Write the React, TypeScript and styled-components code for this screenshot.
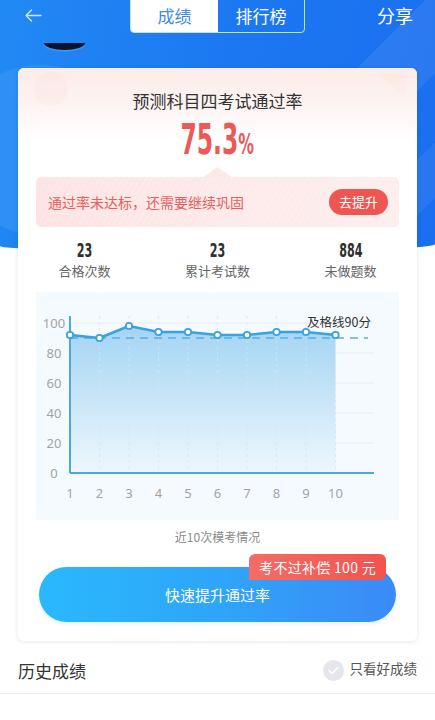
import React from "react";
import styled, { createGlobalStyle } from "styled-components";

const GlobalStyle = createGlobalStyle`
  html, body { margin: 0; padding: 0; background: #fff; }
  body { font-family: "Noto Sans CJK SC", "Noto Sans", sans-serif; width: 435px; }
  * { box-sizing: border-box; }
`;

const Page = styled.div`
  position: relative;
  width: 435px;
  min-height: 720px;
  overflow: hidden;
  background: #fff;
`;

const Backdrop = styled.div`
  position: absolute;
  left: 0;
  top: 0;
  width: 435px;
  height: 252px;
  background:
    radial-gradient(circle at 40px 150px, rgba(255, 255, 255, 0.07) 0 85px, transparent 86px),
    linear-gradient(135deg, transparent 0 62%, rgba(255, 255, 255, 0.07) 62% 74%, transparent 74%),
    linear-gradient(135deg, transparent 0 84%, rgba(255, 255, 255, 0.06) 84% 92%, transparent 92%),
    linear-gradient(100deg, #2189f4 0%, #1c78f1 50%, #1b6ef0 100%);
  border-radius: 0 0 45% 55% / 0 0 8px 6px;
  z-index: 0;
`;

const Smile = styled.div`
  position: absolute;
  left: 44px;
  top: 43px;
  width: 41px;
  height: 7px;
  background: #08152c;
  border-radius: 0 0 50% 50% / 0 0 100% 100%;
  box-shadow: 0 1px 2px rgba(120, 180, 255, 0.6);
`;

const Content = styled.div`
  position: relative;
  z-index: 1;
`;

const TopBar = styled.div`
  display: grid;
  grid-template-columns: 1fr auto 1fr;
  align-items: start;
  height: 33px;
`;

const Back = styled.div`
  padding: 9px 0 0 25px;
  line-height: 0;
`;

const Tabs = styled.div`
  display: flex;
  margin-top: -4px;
  height: 37px;
  border: 1px solid rgba(255, 255, 255, 0.75);
  border-radius: 0 0 4px 4px;
  overflow: hidden;
`;

const Tab = styled.div<{ $active?: boolean }>`
  width: ${(p) => (p.$active ? 87 : 86)}px;
  display: flex;
  align-items: center;
  justify-content: center;
  padding-top: 3px;
  font-size: 17px;
  line-height: 24px;
  background: ${(p) => (p.$active ? "#fff" : "transparent")};
  color: ${(p) => (p.$active ? "#3f8be3" : "#fff")};
`;

const Share = styled.div`
  justify-self: end;
  padding: 3px 22px 0 0;
  font-size: 18px;
  line-height: 24px;
  color: #fff;
`;

const Card = styled.div`
  margin: 35px 18px 0;
  background: #fff;
  border-radius: 6px;
  box-shadow: 0 1px 5px rgba(0, 0, 0, 0.1);
  overflow: hidden;
  padding-bottom: 19px;
`;

const CardHead = styled.div`
  position: relative;
  padding-top: 21px;
  text-align: center;
  background: linear-gradient(180deg, #fdebe8 0%, #fdf3f1 35%, #ffffff 75%);
  &::before {
    content: "";
    position: absolute;
    left: 16px;
    top: 4px;
    width: 34px;
    height: 34px;
    border-radius: 50%;
    background: rgba(250, 215, 205, 0.18);
  }
  &::after {
    content: "";
    position: absolute;
    right: 10px;
    top: 6px;
    width: 44px;
    height: 44px;
    background: linear-gradient(135deg, rgba(250, 210, 200, 0.25), rgba(255, 255, 255, 0));
    clip-path: polygon(40% 0, 100% 0, 100% 60%);
  }
`;

const Title = styled.div`
  position: relative;
  z-index: 1;
  font-size: 17px;
  line-height: 24px;
  color: #333;
`;

const RateRow = styled.div`
  height: 44px;
  margin-top: 7px;
  display: flex;
  justify-content: center;
  align-items: center;
`;

const Rate = styled.div`
  display: inline-block;
  font-family: "DejaVu Sans Condensed", "DejaVu Sans", sans-serif;
  font-weight: bold;
  font-size: 42px;
  line-height: 44px;
  color: #eb5a56;
  transform: scaleX(0.62);
  white-space: nowrap;
`;

const Pct = styled.span`
  font-size: 28px;
`;

const Banner = styled.div`
  position: relative;
  margin: 13px 18px 0;
  height: 50px;
  border-radius: 5px;
  display: flex;
  align-items: center;
  justify-content: space-between;
  padding: 0 11px 0 12px;
  background:
    repeating-linear-gradient(120deg, rgba(255, 255, 255, 0.12) 0 2px, transparent 2px 5px),
    linear-gradient(90deg, #fde4e3 0%, #fdeaea 60%, #fdeeed 100%);
  &::before {
    content: "";
    position: absolute;
    left: 50%;
    top: -10px;
    margin-left: -14px;
    width: 28px;
    height: 10px;
    background: #fde8e7;
    clip-path: polygon(50% 0, 100% 100%, 0 100%);
  }
`;

const BannerText = styled.span`
  font-size: 14px;
  line-height: 20px;
  color: #e8605c;
`;

const BoostButton = styled.div`
  width: 59px;
  height: 26px;
  border-radius: 13px;
  background: #ef5652;
  color: #fff;
  font-size: 13px;
  line-height: 26px;
  text-align: center;
`;

const Stats = styled.div`
  display: grid;
  grid-template-columns: repeat(3, 1fr);
  margin-top: 12px;
`;

const Stat = styled.div`
  display: flex;
  flex-direction: column;
  align-items: center;
`;

const StatNum = styled.div`
  font-family: "DejaVu Sans Condensed", "DejaVu Sans", sans-serif;
  font-weight: bold;
  font-size: 20px;
  line-height: 22px;
  color: #2f2f2f;
  transform: scaleX(0.62);
`;

const StatLabel = styled.div`
  font-size: 13px;
  line-height: 20px;
  color: #666;
`;

const ChartBox = styled.div`
  margin: 11px 18px 0;
  height: 228px;
  background: #f5fafe;
  line-height: 0;
`;

const Caption = styled.div`
  margin-top: 8px;
  text-align: center;
  font-size: 12px;
  line-height: 18px;
  color: #8a8a8a;
`;

const ActionWrap = styled.div`
  position: relative;
  margin: 21px 21px 0;
`;

const ActionButton = styled.div`
  height: 55px;
  border-radius: 28px;
  background: linear-gradient(90deg, #29b9fb 0%, #2fa5f9 50%, #3b8af6 100%);
  color: #fff;
  font-size: 15px;
  line-height: 55px;
  text-align: center;
  box-shadow: 0 2px 4px rgba(60, 140, 240, 0.15);
`;

const Tag = styled.div`
  position: absolute;
  right: 10px;
  top: -13px;
  height: 26px;
  padding: 0 10px;
  border-radius: 6px 6px 6px 0;
  background: linear-gradient(90deg, #f36d66 0%, #f2534e 100%);
  color: #fff;
  font-size: 14px;
  line-height: 26px;
  letter-spacing: 0.3px;
  white-space: nowrap;
`;

const HistoryRow = styled.div`
  display: flex;
  align-items: center;
  justify-content: space-between;
  height: 53px;
  padding: 7px 18px 0;
  border-bottom: 1px solid #ededed;
`;

const HistoryTitle = styled.div`
  font-size: 17px;
  line-height: 24px;
  color: #333;
`;

const Filter = styled.div`
  display: flex;
  align-items: center;
  gap: 6px;
`;

const CheckDot = styled.div`
  width: 21px;
  height: 21px;
  border-radius: 50%;
  background: #e5e5ee;
  display: flex;
  align-items: center;
  justify-content: center;
`;

const FilterText = styled.span`
  font-size: 13.5px;
  line-height: 20px;
  color: #555;
  margin-top: -6px;
`;

const values = [92, 90, 98, 94, 94, 92, 92, 94, 94, 92];
const X0 = 34;
const STEP = 29.5;
const Y0 = 181;
const xi = (i: number) => X0 + STEP * i;
const yv = (v: number) => Y0 - 1.5 * v;

function Chart() {
  const pts = values.map((v, i) => `${xi(i)},${yv(v)}`).join(" ");
  const area = `M${xi(0)},${yv(values[0])} ` +
    values.map((v, i) => `L${xi(i)},${yv(v)}`).join(" ") +
    ` L${xi(9)},${Y0} L${xi(0)},${Y0} Z`;
  return (
    <svg width="362" height="228" viewBox="0 0 362 228">
      <defs>
        <linearGradient id="fillG" x1="0" y1="0" x2="0" y2="1">
          <stop offset="0" stopColor="#a3d4f3" />
          <stop offset="1" stopColor="#eef7fd" />
        </linearGradient>
      </defs>
      {[20, 40, 60, 80, 100].map((v) => (
        <line key={v} x1={X0} x2={338} y1={yv(v)} y2={yv(v)} stroke="#e6f0f7" strokeWidth="1" />
      ))}
      <path d={area} fill="url(#fillG)" />
      {values.map((_, i) =>
        i > 0 ? (
          <line key={i} x1={xi(i)} x2={xi(i)} y1={24} y2={Y0} stroke="#d4e6f2" strokeWidth="1" strokeDasharray="3 3" opacity="0.7" />
        ) : null
      )}
      <line x1={X0} x2={332} y1={yv(90)} y2={yv(90)} stroke="#58aee2" strokeWidth="1.5" strokeDasharray="8 6" />
      <line x1={X0} x2={X0} y1={24} y2={Y0} stroke="#4aaade" strokeWidth="2" />
      <line x1={X0} x2={338} y1={Y0} y2={Y0} stroke="#4aaade" strokeWidth="2" />
      <polyline points={pts} fill="none" stroke="#3aa2dc" strokeWidth="2.5" strokeLinejoin="round" />
      {values.map((v, i) => (
        <circle key={i} cx={xi(i)} cy={yv(v)} r="3.2" fill="#fff" stroke="#3aa2dc" strokeWidth="1.8" />
      ))}
      {[0, 20, 40, 60, 80, 100].map((v) => (
        <text key={v} x={18} y={yv(v) + 4.5} textAnchor="middle" fontSize="13" fill="#a3a3a3" fontFamily="'Noto Sans', sans-serif">
          {v}
        </text>
      ))}
      {values.map((_, i) => (
        <text key={i} x={xi(i)} y={206} textAnchor="middle" fontSize="13" fill="#a3a3a3" fontFamily="'Noto Sans', sans-serif">
          {i + 1}
        </text>
      ))}
      <text x={271} y={34.5} fontSize="12.5" fill="#333" fontFamily="'Noto Sans CJK SC', sans-serif">
        及格线90分
      </text>
    </svg>
  );
}

export default function App() {
  return (
    <Page>
      <GlobalStyle />
      <Backdrop>
        <Smile />
      </Backdrop>
      <Content>
        <TopBar>
          <Back>
            <svg width="17" height="13" viewBox="0 0 17 13" fill="none">
              <path d="M16 6.5H1.5M6.5 1L1 6.5L6.5 12" stroke="rgba(255,255,255,0.8)" strokeWidth="1.4" strokeLinecap="round" strokeLinejoin="round" />
            </svg>
          </Back>
          <Tabs>
            <Tab $active>成绩</Tab>
            <Tab>排行榜</Tab>
          </Tabs>
          <Share>分享</Share>
        </TopBar>
        <Card>
          <CardHead>
            <Title>预测科目四考试通过率</Title>
            <RateRow>
              <Rate>
                75.3<Pct>%</Pct>
              </Rate>
            </RateRow>
          </CardHead>
          <Banner>
            <BannerText>通过率未达标，还需要继续巩固</BannerText>
            <BoostButton>去提升</BoostButton>
          </Banner>
          <Stats>
            <Stat>
              <StatNum>23</StatNum>
              <StatLabel>合格次数</StatLabel>
            </Stat>
            <Stat>
              <StatNum>23</StatNum>
              <StatLabel>累计考试数</StatLabel>
            </Stat>
            <Stat>
              <StatNum>884</StatNum>
              <StatLabel>未做题数</StatLabel>
            </Stat>
          </Stats>
          <ChartBox>
            <Chart />
          </ChartBox>
          <Caption>近10次模考情况</Caption>
          <ActionWrap>
            <ActionButton>快速提升通过率</ActionButton>
            <Tag>考不过补偿 100 元</Tag>
          </ActionWrap>
        </Card>
        <HistoryRow>
          <HistoryTitle>历史成绩</HistoryTitle>
          <Filter>
            <CheckDot>
              <svg width="11" height="9" viewBox="0 0 11 9" fill="none">
                <path d="M1 4.5L4 7.5L10 1.5" stroke="#fff" strokeWidth="1.6" strokeLinecap="round" strokeLinejoin="round" />
              </svg>
            </CheckDot>
            <FilterText>只看好成绩</FilterText>
          </Filter>
        </HistoryRow>
      </Content>
    </Page>
  );
}
